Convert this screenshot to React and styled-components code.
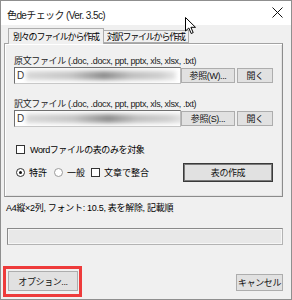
import React from 'react';
import styled, { createGlobalStyle } from 'styled-components';

const GlobalStyle = createGlobalStyle`
  html, body {
    margin: 0;
    padding: 0;
    background: #ffffff;
  }
  body {
    font-family: "Liberation Sans", "Noto Sans CJK JP", sans-serif;
    color: #000;
  }
  * { box-sizing: border-box; }
`;

function CloseIcon() {
  return (
    <svg width="11" height="11" viewBox="0 0 11 11">
      <path d="M0.5 0.5 L10.5 10.5 M10.5 0.5 L0.5 10.5" stroke="#111" strokeWidth="1" fill="none" />
    </svg>
  );
}

function Cursor() {
  return (
    <svg width="12" height="18" viewBox="0 0 12 18">
      <path
        d="M0.5 0.5 L0.5 14 L3.8 11 L6.2 16.5 L8.2 15.6 L5.9 10.3 L10.5 10.3 Z"
        fill="#fff"
        stroke="#000"
        strokeWidth="1"
        strokeLinejoin="round"
      />
    </svg>
  );
}

function BlurredPath({ width }) {
  return (
    <Styled.PathText>
      <span>D</span>
      <Styled.Blur style={{ width }} />
    </Styled.PathText>
  );
}

function FileField({ label, browseLabel, blurWidth }) {
  return (
    <>
      <Styled.Label>{label}</Styled.Label>
      <Styled.FieldRow>
        <Styled.Input>
          <BlurredPath width={blurWidth} />
        </Styled.Input>
        <Styled.Button $width={54}>{browseLabel}</Styled.Button>
        <Styled.Button $width={36}>開く</Styled.Button>
      </Styled.FieldRow>
    </>
  );
}

function App() {
  return (
    <>
      <GlobalStyle />
      <Styled.Window>
        <Styled.TitleBar>
          <Styled.Title>色deチェック (Ver. 3.5c)</Styled.Title>
          <Styled.Close><CloseIcon /></Styled.Close>
        </Styled.TitleBar>
        <Styled.Pointer><Cursor /></Styled.Pointer>

        <Styled.Body>
          <Styled.Tabs>
            <Styled.Tab $active>別々のファイルから作成</Styled.Tab>
            <Styled.Tab>対訳ファイルから作成</Styled.Tab>
          </Styled.Tabs>
          <Styled.Panel>
            <FileField
              label="原文ファイル (.doc, .docx, ppt, pptx, xls, xlsx, .txt)"
              browseLabel="参照(W)..."
              blurWidth={150}
            />
            <Styled.Gap $h={14} />
            <FileField
              label="訳文ファイル (.doc, .docx, ppt, pptx, xls, xlsx, .txt)"
              browseLabel="参照(S)..."
              blurWidth={158}
            />
            <Styled.CheckRow>
              <Styled.Box />
              <span>Wordファイルの表のみを対象</span>
            </Styled.CheckRow>
            <Styled.OptionRow>
              <Styled.Choice $after={7}>
                <Styled.Radio $checked />
                <span>特許</span>
              </Styled.Choice>
              <Styled.Choice $after={6}>
                <Styled.Radio />
                <span>一般</span>
              </Styled.Choice>
              <Styled.Choice>
                <Styled.Box />
                <span>文章で整合</span>
              </Styled.Choice>
              <Styled.Spacer />
              <Styled.Button $width={90} $height={19} $default>表の作成</Styled.Button>
            </Styled.OptionRow>
          </Styled.Panel>

          <Styled.Status>A4縦×2列, フォント: 10.5, 表を解除, 記載順</Styled.Status>
          <Styled.Progress />

          <Styled.Footer>
            <Styled.Highlight>
              <Styled.Button $width={70} $height={20}>オプション...</Styled.Button>
            </Styled.Highlight>
            <Styled.Button $width={47} $height={17} style={{ marginBottom: 6 }}>キャンセル</Styled.Button>
          </Styled.Footer>
        </Styled.Body>
      </Styled.Window>
    </>
  );
}

const Styled = {
  Window: styled.div`
    position: relative;
    width: 292px;
    height: 300px;
    background: #f0f0f0;
    border: 1px solid #8f8f8f;
    display: flex;
    flex-direction: column;
    overflow: hidden;
  `,
  TitleBar: styled.div`
    height: 24px;
    background: #ffffff;
    display: flex;
    align-items: center;
    justify-content: space-between;
    padding: 0 6px 0 6px;
  `,
  Title: styled.span`
    font-size: 10px;
    padding-top: 2px;
    letter-spacing: -0.6px;
    color: #1a1a1a;
  `,
  Close: styled.span`
    display: flex;
    margin-right: 2px;
    margin-top: -1px;
  `,
  Pointer: styled.div`
    position: absolute;
    left: 184px;
    top: 16px;
    line-height: 0;
    z-index: 5;
  `,
  Body: styled.div`
    flex: 1;
    display: flex;
    flex-direction: column;
    padding: 3px 8px 0 3px;
    font-size: 9px;
  `,
  Tabs: styled.div`
    display: flex;
    align-items: flex-end;
    height: 15px;
    margin-left: 4px;
    position: relative;
    z-index: 1;
  `,
  Tab: styled.div`
    height: ${({ $active }) => ($active ? '16px' : '13px')};
    margin-bottom: ${({ $active }) => ($active ? '-1px' : '0')};
    padding: 0 ${({ $active }) => ($active ? '4px' : '3px')};
    border: 1px solid #adadad;
    border-bottom: ${({ $active }) => ($active ? 'none' : '1px solid #adadad')};
    border-left: ${({ $active }) => ($active ? '1px solid #adadad' : 'none')};
    background: #f0f0f0;
    display: flex;
    align-items: center;
    font-size: 9px;
    white-space: nowrap;
    letter-spacing: -1.2px;
  `,
  Panel: styled.div`
    height: 154px;
    border: 1px solid #a3a3a3;
    border-right-color: #8c8c8c;
    border-bottom-color: #8c8c8c;
    box-shadow: inset 1px 1px 0 #ffffff, inset -1px -1px 0 #e3e3e3;
    padding: 11px 9px 0 9px;
    display: flex;
    flex-direction: column;
  `,
  Label: styled.div`
    height: 12px;
    line-height: 12px;
    white-space: nowrap;
    letter-spacing: -0.35px;
    color: #222;
  `,
  FieldRow: styled.div`
    display: flex;
    align-items: center;
    height: 17px;
    & > *:last-child { margin-left: 2px; }
  `,
  Input: styled.div`
    flex: 1;
    height: 17px;
    background: #ffffff;
    border: 1px solid #6f6f6f;
    border-right-color: #bcbcbc;
    border-bottom-color: #c8c8c8;
    display: flex;
    align-items: center;
    padding-left: 2px;
    overflow: hidden;
  `,
  PathText: styled.div`
    display: flex;
    align-items: center;
    gap: 2px;
    font-size: 10px;
    color: #333;
  `,
  Blur: styled.span`
    display: block;
    height: 9px;
    background: linear-gradient(90deg, #d8d8d8 0%, #c6c6c6 30%, #8f8f8f 52%, #c0c0c0 70%, #cfcfcf 90%, #e6e6e6 100%);
    filter: blur(2px);
  `,
  Button: styled.div`
    width: ${({ $width }) => $width}px;
    height: ${({ $height }) => $height || 15}px;
    flex: none;
    display: flex;
    align-items: center;
    justify-content: center;
    background: #e1e1e1;
    border: 1px solid ${({ $default }) => ($default ? '#3a3a3a' : '#adadad')};
    box-shadow: ${({ $default }) => ($default ? 'inset 0 0 0 1px #7a7a7a' : 'none')};
    font-size: 9px;
    white-space: nowrap;
    letter-spacing: -0.4px;
    color: #111;
  `,
  Gap: styled.div`
    height: ${({ $h }) => $h}px;
    flex: none;
  `,
  CheckRow: styled.div`
    display: flex;
    align-items: center;
    gap: 5px;
    height: 12px;
    margin-top: 16px;
    padding-left: 2px;
    white-space: nowrap;
    letter-spacing: -0.4px;
  `,
  OptionRow: styled.div`
    display: flex;
    align-items: center;
    height: 19px;
    margin-top: 8px;
    padding-left: 2px;
    white-space: nowrap;
  `,
  Choice: styled.div`
    display: flex;
    align-items: center;
    gap: 4px;
    margin-right: ${({ $after }) => $after || 0}px;
  `,
  Spacer: styled.div`
    flex: 1;
  `,
  Box: styled.span`
    width: 9px;
    height: 9px;
    flex: none;
    background: #ffffff;
    border: 1px solid #333333;
  `,
  Radio: styled.span`
    width: 9px;
    height: 9px;
    flex: none;
    border-radius: 50%;
    background: #ffffff;
    border: 1px solid ${({ $checked }) => ($checked ? '#333333' : '#9a9a9a')};
    display: flex;
    align-items: center;
    justify-content: center;
    &::after {
      content: '';
      width: 3px;
      height: 3px;
      border-radius: 50%;
      background: ${({ $checked }) => ($checked ? '#111' : 'transparent')};
    }
  `,
  Status: styled.div`
    margin-top: 5px;
    height: 12px;
    line-height: 12px;
    padding-left: 2px;
    white-space: nowrap;
    letter-spacing: -0.3px;
  `,
  Progress: styled.div`
    margin: 14px 0 0 3px;
    height: 17px;
    background: #e8e8e8;
    border: 1px solid #b3b3b3;
    border-top-color: #8a8a8a;
    border-left-color: #8a8a8a;
    box-shadow: inset 0 0 0 1px #f6f6f6;
  `,
  Footer: styled.div`
    margin-top: 21px;
    display: flex;
    justify-content: space-between;
    align-items: flex-end;
  `,
  Highlight: styled.div`
    border: 3px solid #ee3b3b;
    padding: 2px 1px 3px 2px;
    margin-left: -1px;
  `,
};

export default App;
